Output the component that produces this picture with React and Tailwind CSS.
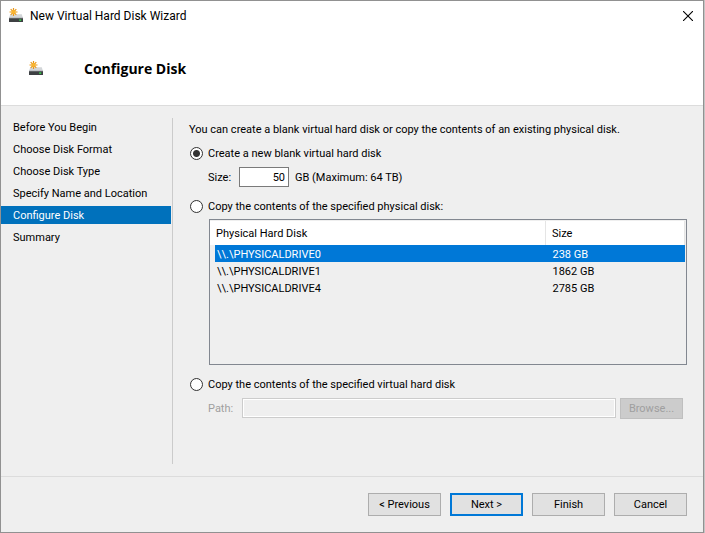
import { useState } from 'react';

const STEPS = [
  'Before You Begin',
  'Choose Disk Format',
  'Choose Disk Type',
  'Specify Name and Location',
  'Configure Disk',
  'Summary',
];

const DRIVES = [
  { name: '\\\\.\\PHYSICALDRIVE0', size: '238 GB' },
  { name: '\\\\.\\PHYSICALDRIVE1', size: '1862 GB' },
  { name: '\\\\.\\PHYSICALDRIVE4', size: '2785 GB' },
];

function DiskIcon() {
  return (
    <svg viewBox="0 0 16 16" className="h-4 w-4 shrink-0" aria-hidden="true">
      <path d="M1.2 6.2h11.6L14 10.2H0z" fill="#d3d6d9" />
      <path d="M0 9.4h14v1H0z" fill="#b4b8bc" />
      <path d="M0 10.2h14V14H0z" fill="#3d4043" />
      <path d="M10.2 11.4h2v1.4h-2z" fill="#35e04a" />
      <path
        d="M4.5 0v8M.5 4h8M1.7 1.2l5.6 5.6M7.3 1.2L1.7 6.8"
        stroke="#e8981a"
        strokeWidth="1.2"
        fill="none"
      />
      <circle cx="4.5" cy="4" r="2.1" fill="#f9b52f" />
    </svg>
  );
}

function ModeRadio({ id, value, mode, onChange, children }) {
  return (
    <div className="flex h-[18px] items-center gap-[5px] pl-px">
      <input
        type="radio"
        name="mode"
        id={id}
        checked={mode === value}
        onChange={() => onChange(value)}
        className="h-[13px] w-[13px] shrink-0 appearance-none rounded-full border border-[#333333] bg-white bg-clip-padding checked:bg-[radial-gradient(circle,#333333_3px,#ffffff_4px)]"
      />
      <label htmlFor={id} className="pt-[2px]">
        {children}
      </label>
    </div>
  );
}

function WizardButton({ primary, children }) {
  return (
    <button
      type="button"
      className={
        primary
          ? 'h-[23px] w-[73px] border-2 border-[#0078d7] bg-[#e1e1e1] pt-px'
          : 'h-[23px] w-[73px] border border-[#adadad] bg-[#e1e1e1] pt-px'
      }
    >
      {children}
    </button>
  );
}

function App() {
  const [mode, setMode] = useState('blank');
  const [size, setSize] = useState('50');
  const [drive, setDrive] = useState(0);

  return (
    <div className="min-h-screen bg-[#c4c4c4] pr-px font-['Roboto',sans-serif] text-[11px] leading-[18px] text-black">
      <div className="flex min-h-screen flex-col border border-[#919191] bg-[#efefef]">
        <header className="border-b border-[#dcdcdc] bg-white pb-[27px]">
          <div className="flex h-[29px] items-center gap-[5px] pr-[10px] pl-2">
            <DiskIcon />
            <span className="flex-1 text-[12px]">New Virtual Hard Disk Wizard</span>
            <button type="button" aria-label="Close">
              <svg viewBox="0 0 10 10" className="h-[10px] w-[10px]" aria-hidden="true">
                <path d="M0 0l10 10M10 0L0 10" stroke="#000000" strokeWidth="1.1" fill="none" />
              </svg>
            </button>
          </div>
          <div className="mt-[30px] flex h-[18px] items-center gap-[39px] pl-7">
            <DiskIcon />
            <h1 className="font-['Open_Sans',sans-serif] text-[14px] font-bold">Configure Disk</h1>
          </div>
        </header>

        <div className="flex flex-1 pt-3 pb-3">
          <nav className="w-[172px] shrink-0 border-r border-[#cbcbcb]">
            <ul className="flex flex-col gap-1 pr-px leading-4">
              {STEPS.map((step) => (
                <li
                  key={step}
                  className={step === 'Configure Disk' ? 'bg-[#0071bc] pt-[2px] pl-3 text-white' : 'pt-[2px] pl-3'}
                  aria-current={step === 'Configure Disk' ? 'step' : undefined}
                >
                  {step}
                </li>
              ))}
            </ul>
          </nav>

          <main className="min-w-0 flex-1 pt-[3px] pr-4 pl-4">
            <p>You can create a blank virtual hard disk or copy the contents of an existing physical disk.</p>

            <div className="mt-[5px]">
              <ModeRadio id="mode-blank" value="blank" mode={mode} onChange={setMode}>
                Create a new blank virtual hard disk
              </ModeRadio>
            </div>
            <div className="mt-[5px] flex h-5 items-center pl-[19px]">
              <label htmlFor="size" className="w-[31px] pt-[2px]">
                Size:
              </label>
              <input
                id="size"
                value={size}
                onChange={(e) => setSize(e.target.value)}
                className="h-5 w-[50px] border border-[#7a7a7a] bg-white pr-[3px] text-right"
              />
              <span className="pt-[2px] pl-[6px]">GB (Maximum: 64 TB)</span>
            </div>

            <div className="mt-[10px]">
              <ModeRadio id="mode-physical" value="physical" mode={mode} onChange={setMode}>
                Copy the contents of the specified physical disk:
              </ModeRadio>
            </div>
            <div className="mt-1 ml-5 h-[146px] border border-[#828790] pt-px pr-px">
              <table className="w-full table-fixed border-collapse text-left">
                <thead>
                  <tr className="h-6 bg-white">
                    <th className="w-[5px] p-0" />
                    <th className="p-0 pt-[2px] pl-px font-normal">Physical Hard Disk</th>
                    <th className="w-[139px] border-x border-[#e5e5e5] p-0 pt-[2px] pl-[6px] font-normal">Size</th>
                  </tr>
                </thead>
                <tbody className="leading-[15px]">
                  {DRIVES.map((d, i) => (
                    <tr key={d.name} onClick={() => setDrive(i)} className={i === drive ? 'text-white' : ''}>
                      <td className="p-0" />
                      <td className={i === drive ? 'bg-[#0078d7] p-0 pt-[2px] pl-[2px]' : 'p-0 pt-[2px] pl-[2px]'}>
                        {d.name}
                      </td>
                      <td className={i === drive ? 'bg-[#0078d7] p-0 pt-[2px] pl-[7px]' : 'p-0 pt-[2px] pl-[7px]'}>
                        {d.size}
                      </td>
                    </tr>
                  ))}
                </tbody>
              </table>
            </div>

            <div className="mt-[10px]">
              <ModeRadio id="mode-virtual" value="virtual" mode={mode} onChange={setMode}>
                Copy the contents of the specified virtual hard disk
              </ModeRadio>
            </div>
            <div className="mt-[5px] flex items-start pr-1 pl-[19px] text-[#9f9f9f]">
              <label htmlFor="path" className="w-[34px] pt-[2px]">
                Path:
              </label>
              <input
                id="path"
                disabled
                className="h-5 min-w-0 flex-1 border border-[#cccccc] bg-[#efefef] px-1 inset-ring inset-ring-white"
              />
              <button
                type="button"
                disabled
                className="ml-1 h-[21px] w-[63px] border border-[#bfbfbf] bg-[#cccccc] pt-px"
              >
                Browse...
              </button>
            </div>
          </main>
        </div>

        <footer className="flex justify-end gap-[9px] border-t border-[#dcdcdc] pt-4 pr-4 pb-4">
          <WizardButton>&lt; Previous</WizardButton>
          <WizardButton primary>Next &gt;</WizardButton>
          <WizardButton>Finish</WizardButton>
          <WizardButton>Cancel</WizardButton>
        </footer>
      </div>
    </div>
  );
}

export default App;
